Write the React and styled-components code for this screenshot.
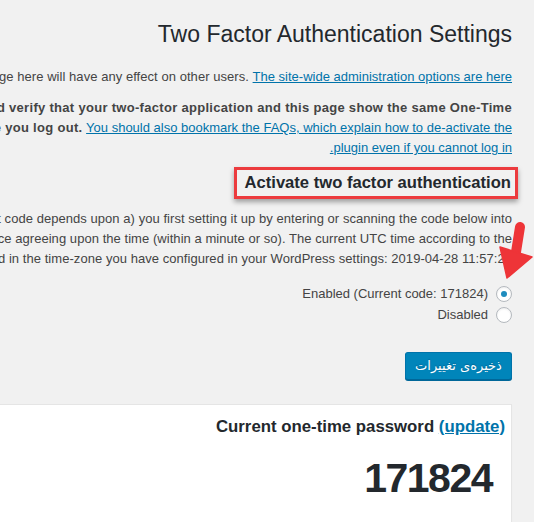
import React from "react";
import styled, { createGlobalStyle } from "styled-components";

const GlobalStyle = createGlobalStyle`
  html, body {
    margin: 0;
    padding: 0;
    background: #f1f1f1;
  }
  body {
    font-family: "Liberation Sans", Arial, sans-serif;
    font-size: 13px;
    color: #444;
  }
`;

function App() {
  return (
    <>
      <GlobalStyle />
      <Page>
        <Content>
          <Title>Two Factor Authentication Settings</Title>

          <Notice>
            <Line>
              These are your personal settings. Nothing you change here will have any effect on other users.{" "}
              <Link href="#">The site-wide administration options are here</Link>
            </Line>
          </Notice>

          <Warning>
            <Line $bold>
              N.B. If you are changing your settings, then you should verify that your two-factor application and this page show the same One-Time
            </Line>
            <Line>
              <Strong>Password (within a minute or so) before you log out.</Strong>{" "}
              <Link href="#">You should also bookmark the FAQs, which explain how to de-activate the</Link>
            </Line>
            <Line>
              <Link href="#">plugin even if you cannot log in.</Link>
            </Line>
          </Warning>

          <HeadingRow>
            <Heading>Activate two factor authentication</Heading>
          </HeadingRow>

          <Description>
            <Line>
              Whether your app will show the correct code depends upon a) you first setting it up by entering or scanning the code below into
            </Line>
            <Line>
              your app, and b) your web-server and your device agreeing upon the time (within a minute or so). The current UTC time according to the
            </Line>
            <Line>
              web-server is 2019-04-28 07:27:26, and in the time-zone you have configured in your WordPress settings: 2019-04-28 11:57:26
            </Line>
          </Description>

          <Choices>
            <Choice>
              <Radio $checked />
              <span>Enabled (Current code: 171824)</span>
            </Choice>
            <Choice>
              <Radio />
              <span>Disabled</span>
            </Choice>
          </Choices>

          <SaveButton type="button">ذخیره‌ی تغییرات</SaveButton>

          <Panel>
            <PanelTitle>
              Current one-time password <Link href="#">(update)</Link>
            </PanelTitle>
            <Code>171824</Code>
          </Panel>
        </Content>

        {/* red annotation arrow pointing at the "Enabled" radio */}
        <Arrow width="40" height="70" viewBox="0 0 40 70">
          <line x1="26" y1="11" x2="22" y2="36" stroke="#ee3438" strokeWidth="10" strokeLinecap="round" />
          <polygon points="6,31 38,41 13,62" fill="#ee3438" strokeLinejoin="round" stroke="#ee3438" strokeWidth="1.5" />
        </Arrow>
      </Page>
    </>
  );
}

export default App;

const Page = styled.div`
  position: relative;
  direction: rtl;
  width: 534px;
  height: 522px;
  overflow: hidden;
`;

const Content = styled.div`
  width: 1200px;
  margin-right: 22px;
`;

const Title = styled.h1`
  margin: 0;
  padding-top: 19px;
  font-size: 23px;
  font-weight: 400;
  line-height: 30px;
  color: #23282d;
  white-space: nowrap;
`;

const Line = styled.div`
  white-space: nowrap;
  line-height: 20px;
  font-weight: ${(p) => (p.$bold ? 700 : 400)};
  letter-spacing: ${(p) => (p.$bold ? "0.3px" : "0.05px")};
`;

const Strong = styled.strong`
  font-weight: 700;
  letter-spacing: 0.3px;
`;

const Link = styled.a`
  color: #0073aa;
  text-decoration: underline;
  letter-spacing: 0;
`;

const Notice = styled.div`
  margin-top: 18px;
`;

const Warning = styled.div`
  margin-top: 11px;
`;

const HeadingRow = styled.div`
  margin-top: 9px;
`;

const Heading = styled.h2`
  display: inline-block;
  margin: 0 -6px 0 0;
  padding: 0 4px 1px 8px;
  border: 3px solid #ec3b3e;
  box-shadow: 0 3px 5px rgba(0, 0, 0, 0.35);
  font-size: 16.6px;
  font-weight: 700;
  line-height: 25px;
  color: #23282d;
  white-space: nowrap;
`;

const Description = styled.div`
  margin-top: 10px;
`;

const Choices = styled.div`
  margin-top: 14px;
  display: flex;
  flex-direction: column;
`;

const Choice = styled.label`
  display: flex;
  align-items: center;
  gap: 8px;
  height: 21px;
  color: #444;
`;

const Radio = styled.span`
  position: relative;
  flex: none;
  width: 16px;
  height: 16px;
  box-sizing: border-box;
  border: 1px solid #b4b9be;
  border-radius: 50%;
  background: #fff;
  box-shadow: inset 0 1px 2px rgba(0, 0, 0, 0.07);

  &::after {
    content: "";
    display: ${(p) => (p.$checked ? "block" : "none")};
    position: absolute;
    top: 4px;
    left: 4px;
    width: 6px;
    height: 6px;
    border-radius: 50%;
    background: #1e8cbe;
  }
`;

const SaveButton = styled.button`
  display: block;
  margin-top: 27px;
  width: 107px;
  height: 28px;
  padding: 0 8px 2px;
  border: 1px solid #0073aa;
  border-bottom-color: #006799;
  border-radius: 3px;
  background: #0085ba;
  box-shadow: 0 1px 0 #006799;
  color: #fff;
  font-family: "DejaVu Sans", "Noto Sans", sans-serif;
  font-size: 13px;
  text-shadow: 0 -1px 1px #006799;
  white-space: nowrap;
`;

const Panel = styled.div`
  margin-top: 24px;
  height: 200px;
  background: #fff;
  border: 1px solid #e5e5e5;
  box-shadow: 0 1px 1px rgba(0, 0, 0, 0.04);
  padding-right: 6px;
`;

const PanelTitle = styled.div`
  margin-top: 11px;
  font-size: 16.8px;
  font-weight: 700;
  line-height: 22px;
  color: #23282d;
  white-space: nowrap;
`;

const Code = styled.div`
  margin-top: 17px;
  margin-right: 13px;
  font-size: 41px;
  font-weight: 700;
  line-height: 46px;
  letter-spacing: -1.5px;
  color: #23282d;
`;

const Arrow = styled.svg`
  position: absolute;
  top: 216px;
  left: 494px;
`;
